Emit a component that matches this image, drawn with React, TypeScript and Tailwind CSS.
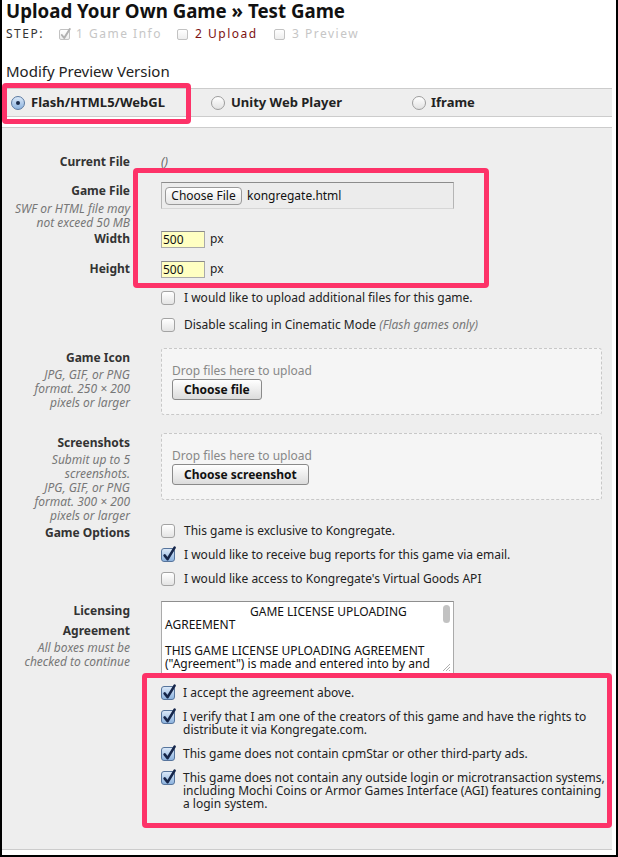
import React from 'react';

const labelCol = 'w-[128px] shrink-0 text-right';
const valCol = 'ml-[31px]';
const labelText = 'font-bold leading-[16px] text-[#333]';
const hintText = 'italic leading-[14px] text-[#777]';

function Check({ checked = false }: { checked?: boolean }) {
  return (
    <span
      className={`relative inline-block w-[14px] h-[14px] shrink-0 rounded-[3px] border ${
        checked
          ? 'border-[#56749c] bg-linear-to-b from-[#dae8f8] to-[#8db3de]'
          : 'border-[#a3a3a3] bg-linear-to-b from-white to-[#e4e4e4]'
      }`}
    >
      {checked && (
        <svg className="absolute -left-px -top-[4px] overflow-visible" width="16" height="18" viewBox="0 0 16 18">
          <path
            d="M3.6 10.4 L6.6 14.2 L13.6 2.6"
            fill="none"
            stroke="#16264a"
            strokeWidth="2.6"
            strokeLinecap="round"
            strokeLinejoin="round"
          />
        </svg>
      )}
    </span>
  );
}

function Radio({ checked = false }: { checked?: boolean }) {
  return (
    <span
      className={`flex items-center justify-center w-[14px] h-[14px] shrink-0 rounded-full border ${
        checked
          ? 'border-[#5a78a0] bg-linear-to-b from-[#dae8f8] to-[#8db3de]'
          : 'border-[#9d9d9d] bg-linear-to-b from-white to-[#e2e2e2]'
      }`}
    >
      {checked && <span className="w-[4px] h-[4px] rounded-full bg-[#1a2a48]" />}
    </span>
  );
}

function StepBox({ checked = false }: { checked?: boolean }) {
  return (
    <span className="relative inline-block w-[11px] h-[11px] shrink-0 rounded-[2px] border border-[#c2c2c2] bg-linear-to-b from-white to-[#eeeeee]">
      {checked && (
        <svg className="absolute -left-px -top-[3px] overflow-visible" width="13" height="14" viewBox="0 0 13 14">
          <path d="M2.8 8 L5.2 11 L10.8 2" fill="none" stroke="#b0b0b0" strokeWidth="2" strokeLinecap="round" strokeLinejoin="round" />
        </svg>
      )}
    </span>
  );
}

function DropZone({ button }: { button: string }) {
  return (
    <div className={`${valCol} w-[441px] h-[67px] border border-dashed border-[#c8c8c8] rounded-[3px] bg-[#f5f5f5] pl-[10px] pt-[15px]`}>
      <div className="leading-[14px] text-[#888]">Drop files here to upload</div>
      <button className="mt-px h-[21px] px-[11px] rounded-[3px] border border-[#8a8a8a] bg-linear-to-b from-white to-[#dcdcdc] font-bold leading-[19px] text-[#111]">
        {button}
      </button>
    </div>
  );
}

const agreements: string[][] = [
  ['I accept the agreement above.'],
  ['I verify that I am one of the creators of this game and have the rights to', 'distribute it via Kongregate.com.'],
  ['This game does not contain cpmStar or other third-party ads.'],
  [
    'This game does not contain any outside login or microtransaction systems,',
    'including Mochi Coins or Armor Games Interface (AGI) features containing',
    'a login system.',
  ],
];

export default function App() {
  return (
    <div className="relative w-[618px] h-[857px] overflow-hidden bg-white border-x-2 border-b-2 border-black font-['Noto_Sans',sans-serif] text-[#222]">
      <div className="pl-[4px]">
        <h1 className="text-[18.7px] font-bold leading-[22px] text-[#111]">Upload Your Own Game » Test Game</h1>
        <div className="mt-[4px] flex items-center h-[16px] text-[12px] tracking-[1.5px]">
          <span className="w-[53px] text-[#333]">STEP:</span>
          <span className="w-[118px] flex items-center">
            <StepBox checked />
            <span className="ml-[6px] text-[#c6c6c6]">1 Game Info</span>
          </span>
          <span className="w-[97px] flex items-center">
            <StepBox />
            <span className="ml-[7px] text-[#7d1212]">2 Upload</span>
          </span>
          <span className="flex items-center">
            <StepBox />
            <span className="ml-[7px] text-[#c6c6c6]">3 Preview</span>
          </span>
        </div>
        <div className="mt-[19px] text-[15px] leading-[20px]">Modify Preview Version</div>
      </div>

      <div className="mt-[7px] mr-[4px] h-[29px] flex items-center pl-[9px] border-y border-[#cccccc] bg-[#eeeeee] text-[13px] font-bold">
        <label className="w-[200px] flex items-center">
          <Radio checked />
          <span className="ml-[6px]">Flash/HTML5/WebGL</span>
        </label>
        <label className="w-[201px] flex items-center">
          <Radio />
          <span className="ml-[6px]">Unity Web Player</span>
        </label>
        <label className="flex items-center">
          <Radio />
          <span className="ml-[5px]">Iframe</span>
        </label>
      </div>

      <div className="mt-[10px] mr-[4px] h-[723px] pt-[26px] border-y border-[#cccccc] bg-[#eeeeee] text-[12px]">
        <div className="flex">
          <div className={`${labelCol} ${labelText}`}>Current File</div>
          <div className={`${valCol} italic leading-[16px] text-[#666]`}>()</div>
        </div>

        <div className="mt-[12px] flex items-start">
          <div className={labelCol}>
            <div className={`mt-px ${labelText}`}>Game File</div>
            <div className={`mt-[3px] ${hintText}`}>
              SWF or HTML file may
              <br />
              not exceed 50 MB
            </div>
          </div>
          <div className={`${valCol} w-[293px] h-[27px] flex items-center pl-[3px] border border-[#b5b5b5] border-t-[#8c8c8c] border-b-[#d6d6d6] bg-[#ececec]`}>
            <button className="h-[18px] w-[77px] rounded-[4px] border border-[#9a9a9a] bg-linear-to-b from-white to-[#e6e6e6] leading-[16px] text-[#111]">
              Choose File
            </button>
            <span className="ml-[5px] text-[#111]">kongregate.html</span>
          </div>
        </div>

        <div className="flex items-center">
          <div className={`${labelCol} ${labelText}`}>Width</div>
          <div className={`${valCol} flex items-center`}>
            <div className="w-[44px] h-[17px] pl-px border border-[#aaaaaa] border-t-[#8a8a8a] bg-[#ffffc2] leading-[15px] text-[#111]">500</div>
            <span className="ml-[5px]">px</span>
          </div>
        </div>

        <div className="mt-[12px] flex items-center">
          <div className={`${labelCol} ${labelText}`}>Height</div>
          <div className={`${valCol} flex items-center`}>
            <div className="w-[44px] h-[17px] pl-px border border-[#aaaaaa] border-t-[#8a8a8a] bg-[#ffffc2] leading-[15px] text-[#111]">500</div>
            <span className="ml-[5px]">px</span>
          </div>
        </div>

        <div className="mt-[12px] flex items-center h-[16px]">
          <div className={labelCol} />
          <div className={`${valCol} flex items-center`}>
            <Check />
            <span className="ml-[9px] leading-[16px]">I would like to upload additional files for this game.</span>
          </div>
        </div>

        <div className="mt-[11px] flex items-center h-[16px]">
          <div className={labelCol} />
          <div className={`${valCol} flex items-center`}>
            <Check />
            <span className="ml-[9px] leading-[16px]">
              Disable scaling in Cinematic Mode <i className="text-[#777]">(Flash games only)</i>
            </span>
          </div>
        </div>

        <div className="mt-[15px] flex items-start">
          <div className={labelCol}>
            <div className={`mt-[2px] ${labelText}`}>Game Icon</div>
            <div className={`mt-[2px] ${hintText}`}>
              JPG, GIF, or PNG
              <br />
              format. 250 × 200
              <br />
              pixels or larger
            </div>
          </div>
          <DropZone button="Choose file" />
        </div>

        <div className="mt-[18px] flex items-start">
          <div className={labelCol}>
            <div className={`mt-[2px] ${labelText}`}>Screenshots</div>
            <div className={`mt-[2px] ${hintText}`}>
              Submit up to 5
              <br />
              screenshots.
              <br />
              JPG, GIF, or PNG
              <br />
              format. 300 × 200
              <br />
              pixels or larger
            </div>
          </div>
          <DropZone button="Choose screenshot" />
        </div>

        <div className="flex items-start">
          <div className={`${labelCol} mt-[2px] ${labelText}`}>Game Options</div>
          <div className={`${valCol} flex flex-col gap-[8px]`}>
            <div className="flex items-center h-[16px]">
              <Check />
              <span className="ml-[9px]">This game is exclusive to Kongregate.</span>
            </div>
            <div className="flex items-center h-[16px]">
              <Check checked />
              <span className="ml-[9px]">I would like to receive bug reports for this game via email.</span>
            </div>
            <div className="flex items-center h-[16px]">
              <Check />
              <span className="ml-[9px]">I would like access to Kongregate's Virtual Goods API</span>
            </div>
          </div>
        </div>

        <div className="mt-[14px] flex items-start">
          <div className={labelCol}>
            <div className="font-bold leading-[20px] text-[#333]">
              Licensing
              <br />
              Agreement
            </div>
            <div className={hintText}>
              All boxes must be
              <br />
              checked to continue
            </div>
          </div>
          <div className={`${valCol} w-[293px] h-[73px] flex border border-[#aaaaaa] border-t-[#8e8e8e] bg-white overflow-hidden`}>
            <div className="flex-1 pl-[3px] pt-[3px] leading-[13px] whitespace-nowrap text-[#111]">
              <div className="pl-[85px]">GAME LICENSE UPLOADING</div>
              <div>AGREEMENT</div>
              <div>&nbsp;</div>
              <div>THIS GAME LICENSE UPLOADING AGREEMENT</div>
              <div>("Agreement") is made and entered into by and</div>
            </div>
            <div className="w-[13px] flex flex-col items-center justify-between pt-[3px] pb-px">
              <div className="w-[7px] h-[18px] rounded-full bg-[#c2c2c2]" />
              <svg width="9" height="9" viewBox="0 0 9 9">
                <path d="M1 8 L8 1 M4 8 L8 4 M7 8 L8 7" stroke="#9a9a9a" strokeWidth="0.8" />
              </svg>
            </div>
          </div>
        </div>

        <div className="mt-[12px] ml-[159px] flex flex-col gap-[10px] leading-[13.3px]">
          {agreements.map((lines) => (
            <div key={lines[0]} className="flex items-start">
              <Check checked />
              <div className="ml-[8px] whitespace-nowrap">
                {lines.map((l) => (
                  <div key={l}>{l}</div>
                ))}
              </div>
            </div>
          ))}
        </div>
      </div>

      <div className="absolute left-0 top-[83px] w-[189px] h-[41px] rounded-[4px] border-[5px] border-[#fd3268]" />
      <div className="absolute left-[131px] top-[168px] w-[356px] h-[120px] rounded-[4px] border-[5px] border-[#fd3268]" />
      <div className="absolute left-[140px] top-[673px] w-[470px] h-[155px] rounded-[4px] border-[5px] border-[#fd3268]" />
    </div>
  );
}
